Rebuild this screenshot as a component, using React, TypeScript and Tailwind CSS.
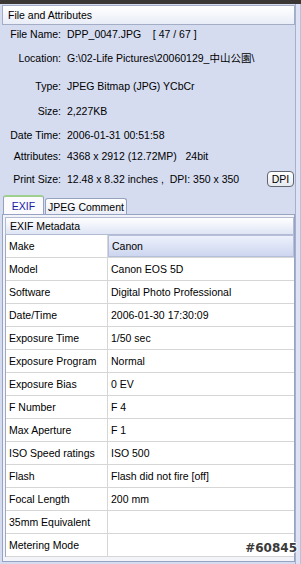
import React from 'react';

const info: { label: string; value: React.ReactNode; mt: string }[] = [
  { label: 'File Name:', value: 'DPP_0047.JPG    [ 47 / 67 ]', mt: 'mt-[2px]' },
  { label: 'Location:', value: 'G:\\02-Life Pictures\\20060129_中山公園\\', mt: 'mt-[10px]' },
  { label: 'Type:', value: 'JPEG Bitmap (JPG) YCbCr', mt: 'mt-[14px]' },
  { label: 'Size:', value: '2,227KB', mt: 'mt-[11px]' },
  { label: 'Date Time:', value: '2006-01-31 00:51:58', mt: 'mt-[10px]' },
  { label: 'Attributes:', value: '4368 x 2912 (12.72MP)   24bit', mt: 'mt-[7px]' },
];

const exif: [string, string][] = [
  ['Make', 'Canon'],
  ['Model', 'Canon EOS 5D'],
  ['Software', 'Digital Photo Professional'],
  ['Date/Time', '2006-01-30 17:30:09'],
  ['Exposure Time', '1/50 sec'],
  ['Exposure Program', 'Normal'],
  ['Exposure Bias', '0 EV'],
  ['F Number', 'F 4'],
  ['Max Aperture', 'F 1'],
  ['ISO Speed ratings', 'ISO 500'],
  ['Flash', 'Flash did not fire [off]'],
  ['Focal Length', '200 mm'],
  ['35mm Equivalent', ''],
  ['Metering Mode', ''],
];

export default function App() {
  return (
    <div className="relative w-[301px] h-[564px] overflow-hidden bg-[#d5dcf0] font-['Liberation_Sans','Noto_Sans_CJK_SC',sans-serif] text-[10.5px] leading-[14px] text-black flex flex-col">
      <div className="h-[4px] bg-[#3b3734]" />
      <div className="flex flex-1">
        <div className="w-[295px] flex flex-col">
          {/* File and Attributes */}
          <div className="ml-[2px] mt-[1px] h-[20px] bg-gradient-to-b from-white to-[#e9edf7] border border-[#a4adc6] flex items-center pl-[5px] whitespace-nowrap">
            File and Attributes
          </div>
          {info.map((r) => (
            <div key={r.label} className={`flex whitespace-pre ${r.mt}`}>
              <div className="w-[61px] text-right">{r.label}</div>
              <div className="pl-[6px]">{r.value}</div>
            </div>
          ))}
          <div className="flex items-center whitespace-pre mt-[8px]">
            <div className="w-[61px] text-right">Print Size:</div>
            <div className="pl-[6px]">12.48 x 8.32 inches ,  DPI: 350 x 350</div>
            <div className="ml-auto mr-[1px] w-[27px] h-[16px] rounded-[4px] border border-[#5f6672] bg-gradient-to-b from-white to-[#e6e9ef] flex items-center justify-center">
              DPI
            </div>
          </div>

          {/* Tabs */}
          <div className="flex items-end mt-[8px] pl-[3px] h-[19px]">
            <div className="w-[41px] h-[19px] bg-[#fbfbfd] border border-b-0 border-[#95a2bf] border-t-2 border-t-[#9fcf8e] rounded-t-[3px] flex items-center justify-center text-[#1a1aa8]">
              EXIF
            </div>
            <div className="ml-[1px] w-[82px] h-[16px] bg-gradient-to-b from-white to-[#ebeef5] border border-b-0 border-[#95a2bf] rounded-t-[3px] flex items-center justify-center">
              JPEG Comment
            </div>
          </div>

          {/* EXIF panel */}
          <div className="flex-1 ml-[2px] mb-[2px] border border-[#97a3c2] bg-[#f3f4fa] flex flex-col pl-[2px] pt-[2px]">
            <div className="h-[18px] bg-gradient-to-b from-white to-[#dfe5f5] border border-[#b3bbd3] flex items-center pl-[4px] whitespace-nowrap">
              EXIF Metadata
            </div>
            <div className="border-l border-[#9ea8c3] bg-white">
              {exif.map(([k, v], i) => (
                <div key={k} className="flex h-[23px] border-b border-[#d6d6d6] whitespace-nowrap">
                  <div className="w-[102px] border-r border-[#d6d6d6] flex items-center pl-[3px]">{k}</div>
                  <div
                    className={`flex-1 flex items-center pl-[3px] ${
                      i === 0 ? 'bg-gradient-to-b from-[#eef1fb] to-[#cdd6f0] border border-[#b4bfdc]' : ''
                    }`}
                  >
                    {v}
                  </div>
                </div>
              ))}
            </div>
          </div>
        </div>
        {/* right edge */}
        <div className="flex-1 flex">
          <div className="w-[1px] bg-[#a7b0cb]" />
          <div className="flex-1 bg-[#dde3f4]" />
          <div className="w-[1px] bg-[#b9c1da]" />
        </div>
      </div>
      <div className="absolute right-[4px] bottom-[9px] font-['DejaVu_Sans',sans-serif] font-bold text-[12px] leading-[14px] text-[#3a3a3a] [text-shadow:1px_0_0_#fff,-1px_0_0_#fff,0_1px_0_#fff,0_-1px_0_#fff]">
        #60845
      </div>
    </div>
  );
}
